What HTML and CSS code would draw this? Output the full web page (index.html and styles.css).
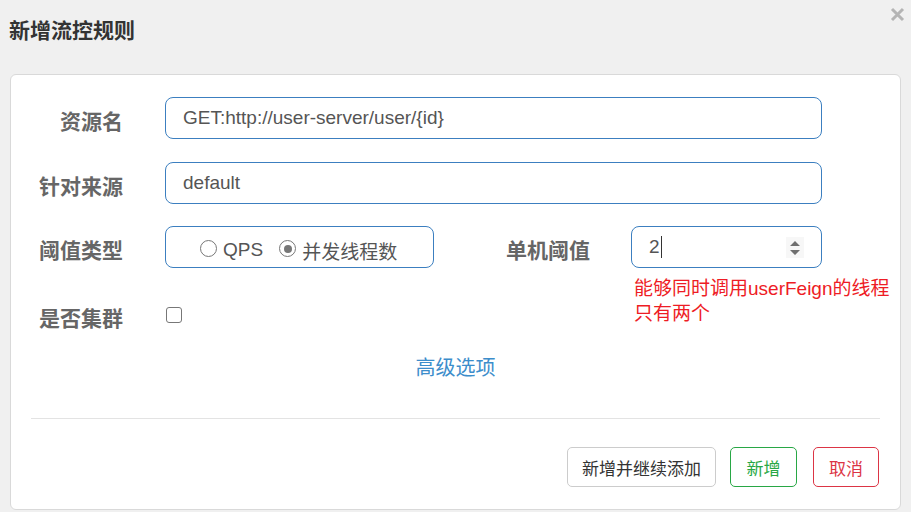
FILE: index.html
```html
<!DOCTYPE html>
<html lang="zh-CN">
<head>
<meta charset="utf-8">
<title>新增流控规则</title>
<link rel="stylesheet" href="styles.css">
</head>
<body>
<div class="dialog">
  <div class="header">
    <div class="title">新增流控规则</div>
    <span class="close" aria-label="关闭">
      <svg width="15" height="15" viewBox="0 0 15 15"><path d="M2 2 L13 13 M13 2 L2 13" stroke="#b4b4b4" stroke-width="3" stroke-linecap="butt"/></svg>
    </span>
  </div>
  <div class="panel">
    <div class="row">
      <label class="label">资源名</label>
      <div class="input wide">GET:http://user-server/user/{id}</div>
    </div>
    <div class="row">
      <label class="label">针对来源</label>
      <div class="input wide">default</div>
    </div>
    <div class="row">
      <label class="label">阈值类型</label>
      <div class="input radios">
        <span class="radio"></span><span class="rtext">QPS</span>
        <span class="radio checked"></span><span class="rtext">并发线程数</span>
      </div>
      <label class="label label2">单机阈值</label>
      <div class="threshold">
        <div class="input num">
          <span class="numval">2</span><span class="caret"></span>
          <span class="spin">
            <svg width="12" height="16" viewBox="0 0 12 16"><path d="M1 6 L6 1 L11 6 Z M1 10 L6 15 L11 10 Z" fill="#6f6f6f"/></svg>
          </span>
        </div>
        <div class="hint">能够同时调用userFeign的线程<br>只有两个</div>
      </div>
    </div>
    <div class="row row4">
      <label class="label">是否集群</label>
      <span class="checkbox"></span>
    </div>
    <div class="advanced"><a class="link">高级选项</a></div>
    <div class="divider"></div>
    <div class="actions">
      <button class="btn btn-default">新增并继续添加</button>
      <button class="btn btn-green">新增</button>
      <button class="btn btn-red">取消</button>
    </div>
  </div>
</div>
</body>
</html>
```
FILE: styles.css
```css
html, body {
  margin: 0;
  padding: 0;
}
body {
  width: 911px;
  height: 512px;
  overflow: hidden;
  background: #f0f0f0;
  font-family: "Liberation Sans", "Noto Sans CJK SC", sans-serif;
  color: #555;
}
.dialog {
  width: 911px;
  height: 512px;
}
.header {
  height: 74px;
  position: relative;
}
.title {
  padding: 20px 0 0 9px;
  font-size: 21px;
  line-height: 22px;
  font-weight: bold;
  color: #333;
}
.close {
  position: absolute;
  top: 7px;
  right: 6px;
  width: 15px;
  height: 15px;
  display: block;
}
.close svg { display: block; }
.panel {
  margin: 0 10px;
  height: 436px;
  box-sizing: border-box;
  background: #fff;
  border: 1px solid #d9d9d9;
  border-radius: 6px;
  padding-top: 22px;
}
.row {
  display: flex;
  align-items: center;
  height: 42px;
  margin-bottom: 23px;
}
.row:nth-child(2) { margin-bottom: 22px; }
.label {
  width: 112px;
  flex: none;
  text-align: right;
  font-size: 21px;
  font-weight: bold;
  color: #666;
  margin-right: 42px;
  padding-top: 3px;
}
.label2 {
  width: 156px;
  margin-right: 41px;
}
.input {
  box-sizing: border-box;
  height: 42px;
  border: 1px solid #3c7fc0;
  border-radius: 8px;
  display: flex;
  align-items: center;
  padding-left: 17px;
  font-size: 19px;
  color: #555;
}
.wide { width: 657px; }
.radios {
  width: 269px;
  padding-left: 34px;
  padding-top: 6px;
}
.radio {
  width: 15px;
  height: 15px;
  border: 1.5px solid #777;
  border-radius: 50%;
  box-sizing: content-box;
  display: inline-block;
  position: relative;
  margin-right: 6px;
  margin-top: -3px;
  flex: none;
}
.radio.checked::after {
  content: "";
  position: absolute;
  left: 3.5px;
  top: 3.5px;
  width: 8px;
  height: 8px;
  border-radius: 50%;
  background: #777;
}
.rtext {
  margin-right: 16px;
  color: #555;
}
.threshold {
  position: relative;
}
.num {
  width: 191px;
  padding-left: 17px;
  position: relative;
}
.caret {
  display: inline-block;
  width: 1px;
  height: 22px;
  background: #333;
  margin-left: 1px;
}
.spin {
  position: absolute;
  right: 17px;
  top: 10px;
  width: 18px;
  height: 21px;
  background: #f7f7f7;
  display: flex;
  align-items: center;
  justify-content: center;
}
.spin svg { display: block; }
.hint {
  position: absolute;
  left: 3px;
  top: 50px;
  white-space: nowrap;
  color: #ee1c25;
  font-size: 19px;
  line-height: 25px;
}
.row4 {
  margin-top: 26px;
  margin-bottom: 0;
}
.checkbox {
  width: 14px;
  height: 14px;
  border: 1.5px solid #777;
  border-radius: 3px;
  display: inline-block;
  margin-left: 1px;
}
.advanced {
  margin-top: 17px;
  height: 30px;
  line-height: 30px;
  text-align: center;
  font-size: 20px;
}
.link {
  color: #3c8dcb;
  text-decoration: none;
}
.divider {
  margin: 35px 20px 0 20px;
  height: 1px;
  background: #e3e3e3;
}
.actions {
  margin-top: 28px;
  margin-right: 21px;
  display: flex;
  justify-content: flex-end;
}
.btn {
  height: 40px;
  box-sizing: border-box;
  border-radius: 5px;
  background: #fff;
  font-family: "Liberation Sans", "Noto Sans CJK SC", sans-serif;
  font-size: 17px;
  padding: 0;
  white-space: nowrap;
  text-align: center;
  cursor: pointer;
}
.btn-default {
  width: 149px;
  border: 1px solid #cccccc;
  color: #333;
  margin-right: 14px;
}
.btn-green {
  width: 67px;
  border: 1px solid #28a745;
  color: #28a745;
  margin-right: 16px;
}
.btn-red {
  width: 66px;
  border: 1px solid #dc3545;
  color: #dc3545;
}
```
